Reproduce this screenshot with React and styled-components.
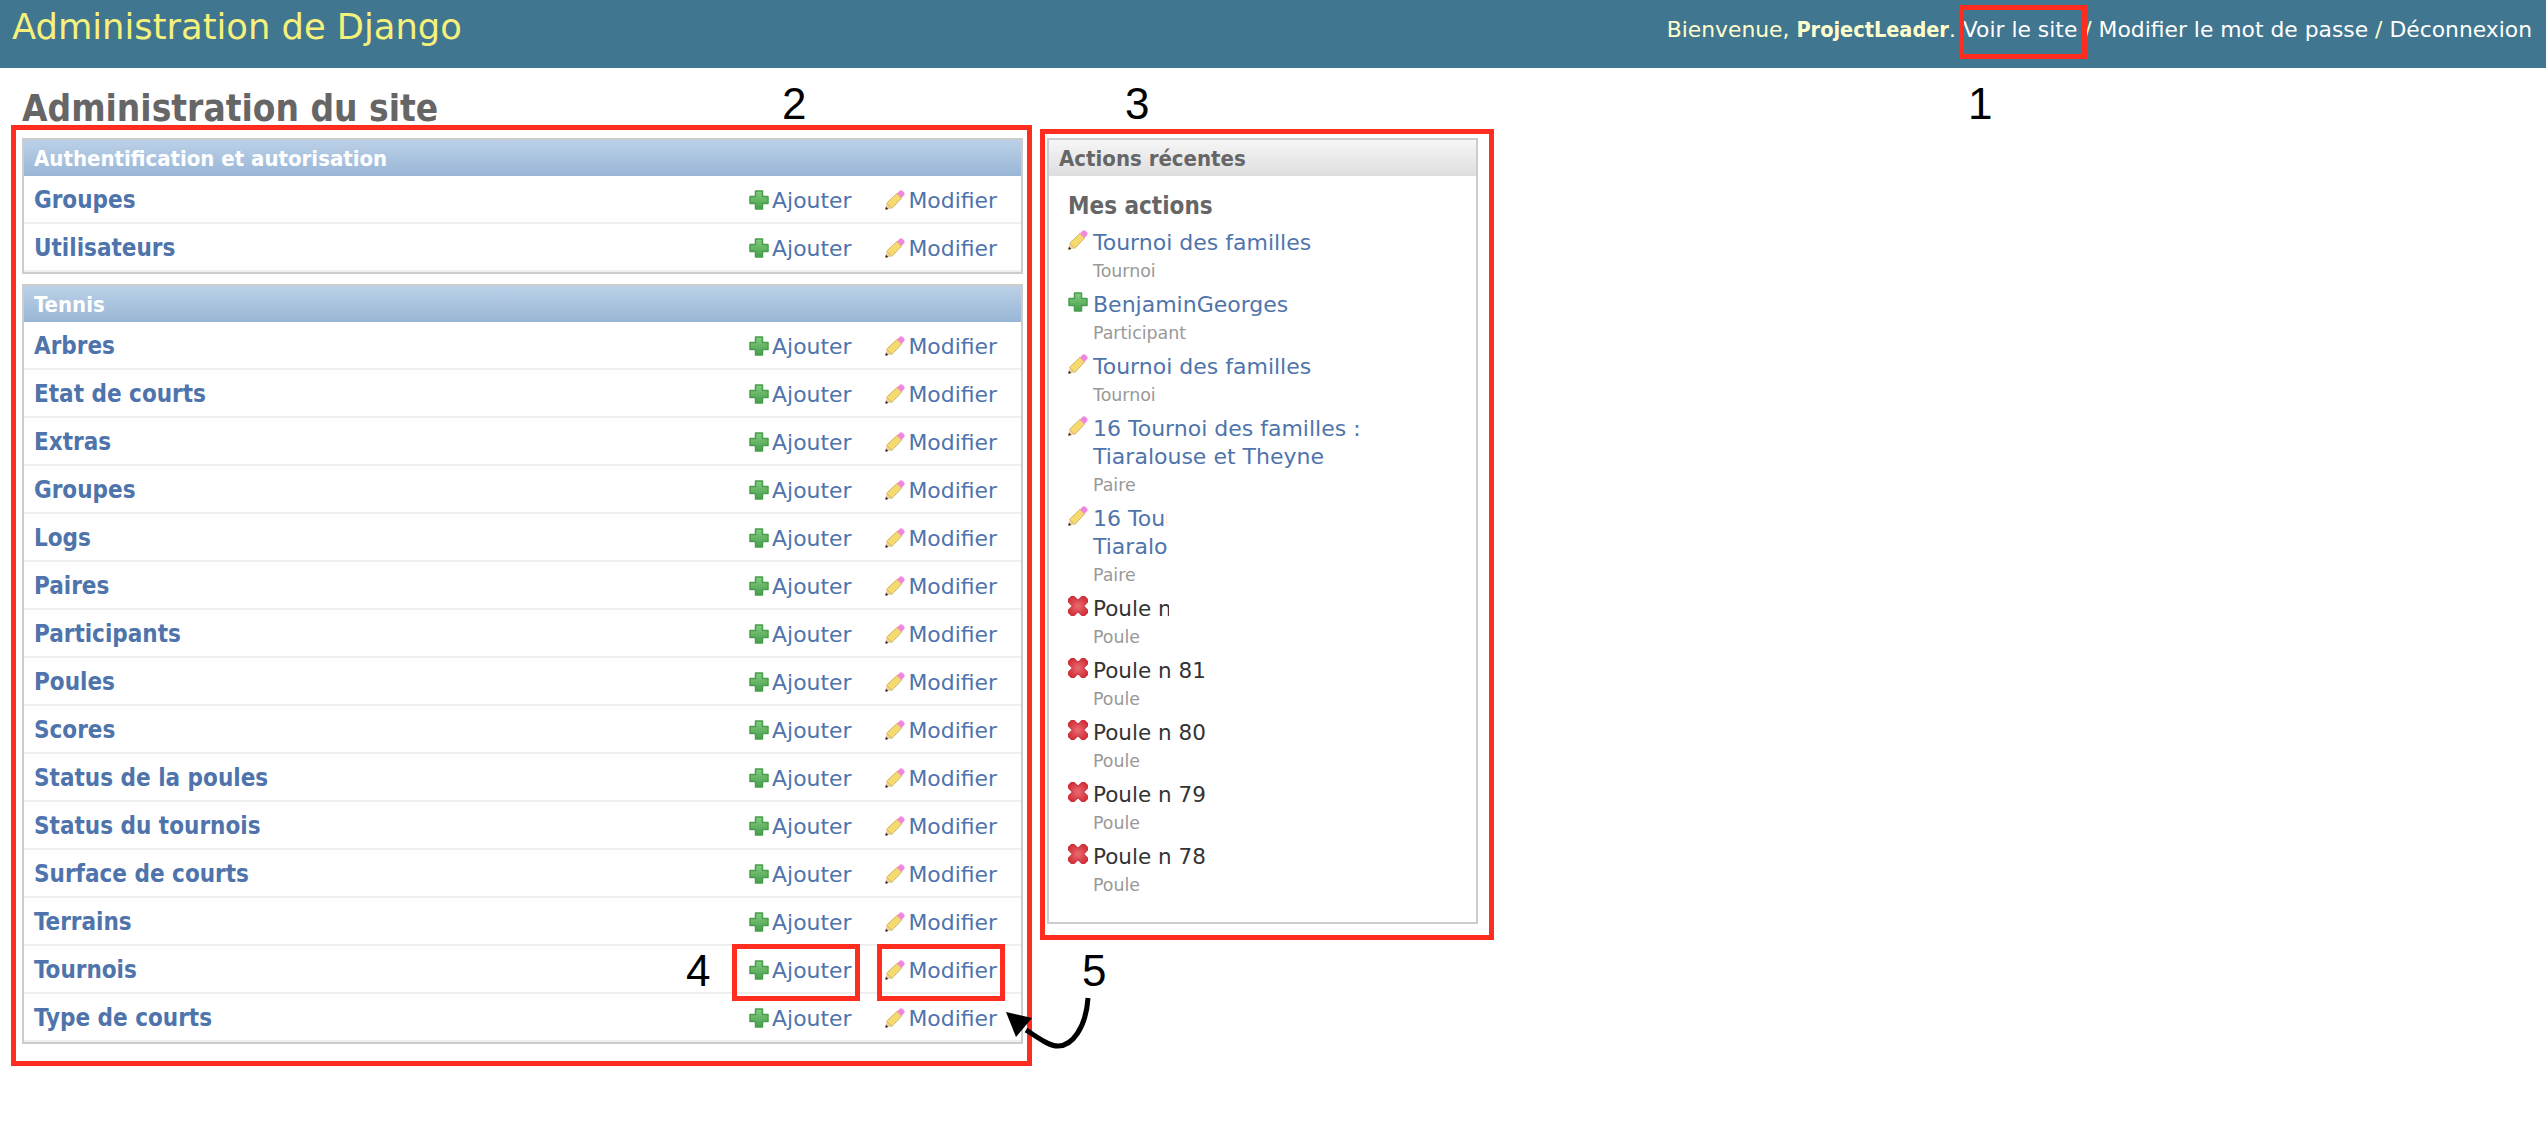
import React from 'react'
import styled, { createGlobalStyle } from 'styled-components'

const Global = createGlobalStyle`
  html, body { margin: 0; padding: 0; background: #fff; }
  body { font-family: "DejaVu Sans", sans-serif; }
`

const Page = styled.div`
  position: relative;
  width: 2546px;
  height: 1140px;
  overflow: hidden;
`
const Header = styled.header`
  height: 68px;
  background: #417690;
  display: flex;
  justify-content: space-between;
  padding: 0 14px 0 12px;
  box-sizing: border-box;
`
const Brand = styled.h1`
  margin: 0;
  font-size: 35.3px;
  font-weight: 400;
  line-height: 54px;
  color: #f5f17a;
`
const UserTools = styled.div`
  font-size: 21.85px;
  line-height: 60px;
  color: #ffc;
  a { color: #fff; }
  strong {
    font-size: 21.5px;
    font-weight: 700;
    font-family: "DejaVu Sans Condensed", "DejaVu Sans", sans-serif;
  }
`
const Content = styled.main`
  padding: 18px 0 0 22px;
`
const Title = styled.h2`
  margin: 0;
  height: 52px;
  font-family: "DejaVu Sans Condensed", "DejaVu Sans", sans-serif;
  font-size: 36.7px;
  line-height: 46px;
  font-weight: 700;
  color: #666;
`
const Columns = styled.div`
  display: flex;
  align-items: flex-start;
  gap: 24px;
`
const LeftColumn = styled.div`
  width: 1001px;
  display: flex;
  flex-direction: column;
  gap: 10px;
`
const Module = styled.section`
  border: 2px solid #ccc;
  box-sizing: border-box;
`
const Caption = styled.div`
  height: 36px;
  padding-left: 10px;
  font-family: "DejaVu Sans Condensed", "DejaVu Sans", sans-serif;
  font-size: 22px;
  font-weight: 700;
  line-height: 37px;
  color: ${p => (p.$grey ? '#666' : '#fff')};
  background: ${p => (p.$grey
    ? 'linear-gradient(#f6f6f6, #dedede)'
    : 'linear-gradient(#bcd1e8, #98b6d6)')};
`
const Row = styled.div`
  height: 48px;
  box-sizing: border-box;
  border-bottom: 2px solid #eee;
  display: flex;
  align-items: center;
  padding: 2px 0 0 10px;
  color: #4f74ab;
  font-size: 21.9px;
`
const RowName = styled.a`
  flex: 1;
  font-family: "DejaVu Sans Condensed", "DejaVu Sans", sans-serif;
  font-size: 24px;
  font-weight: 700;
`
const RowAction = styled.a`
  display: flex;
  align-items: center;
  gap: 3px;
  margin-right: ${p => p.$end}px;
`
const Side = styled(Module)`
  width: 431px;
  height: 786px;
`
const SideBody = styled.div`
  padding: 14px 0 0 19px;
`
const SideTitle = styled.h3`
  margin: 0 0 7px;
  font-family: "DejaVu Sans Condensed", "DejaVu Sans", sans-serif;
  font-size: 24px;
  line-height: 32px;
  font-weight: 700;
  color: #666;
`
const Item = styled.div`
  display: grid;
  grid-template-columns: 20px 1fr;
  column-gap: 5px;
  padding-bottom: 6px;
`
const ItemIcon = styled.div`
  padding-top: 1px;
`
const ItemLink = styled.a`
  display: block;
  font-size: ${p => (p.$deleted ? '21.5px' : '22px')};
  line-height: 28px;
  width: ${p => p.$clip || 290}px;
  overflow: hidden;
  color: ${p => (p.$deleted ? '#333' : '#4f74ab')};
`
const ItemLinkText = styled.span`
  display: block;
  width: 290px;
`
const ItemKind = styled.div`
  font-size: 17.4px;
  line-height: 28px;
  color: #999;
`
const Frame = styled.div`
  position: absolute;
  box-sizing: border-box;
  border: 5px solid #ff2d20;
  left: ${p => p.$x}px;
  top: ${p => p.$y}px;
  width: ${p => p.$w}px;
  height: ${p => p.$h}px;
`
const Mark = styled.div`
  position: absolute;
  left: ${p => p.$x}px;
  top: ${p => p.$y}px;
  font-family: "Liberation Sans", sans-serif;
  font-size: 44px;
  line-height: 50px;
  color: #000;
`
const Arrow = styled.svg`
  position: absolute;
  left: 1000px;
  top: 990px;
`

const PlusIcon = ({ id }) => (
  <svg width="20" height="20" viewBox="0 0 20 20">
    <defs>
      <linearGradient id={id} x1="0" y1="0" x2="0" y2="1">
        <stop offset="0" stopColor="#86cc80" />
        <stop offset="1" stopColor="#459f4a" />
      </linearGradient>
    </defs>
    <path d="M6.5 1h7v5.5H19v7h-5.5V19h-7v-5.5H1v-7h5.5z" fill={`url(#${id})`} stroke="#4a9d4e" strokeWidth="1.5" strokeLinejoin="round" />
  </svg>
)

const PencilIcon = () => (
  <svg width="20" height="20" viewBox="0 0 20 20">
    <path d="M0.3 19.7 L1.6 13.2 L6.8 18.4 Z" fill="#ecd0a8" />
    <path d="M0.3 19.7 L0.9 16.7 L3.3 19.1 Z" fill="#2d1c08" />
    <path d="M1.6 13.2 L11.9 3.4 L16.6 8.1 L6.8 18.4 Z" fill="#f6da70" stroke="#c9a94e" strokeWidth="0.8" />
    <path d="M11.9 3.4 L15 0.6 Q16.2 -0.1 17.4 0.8 L19.2 2.6 Q20 3.8 19.2 5 L16.6 8.1 Z" fill="#f187dc" />
  </svg>
)

const CrossIcon = ({ id }) => (
  <svg width="20" height="20" viewBox="0 0 20 20">
    <defs>
      <radialGradient id={id}>
        <stop offset="0" stopColor="#ea6a72" />
        <stop offset="1" stopColor="#d02c35" />
      </radialGradient>
    </defs>
    <path transform="rotate(45 10 10)" d="M6 -1.5h8V6h7.5v8H14v7.5H6V14h-7.5V6H6z" fill={`url(#${id})`} stroke="#c8323a" strokeWidth="1" strokeLinejoin="round" />
  </svg>
)

const auth = ['Groupes', 'Utilisateurs']
const tennis = ['Arbres', 'Etat de courts', 'Extras', 'Groupes', 'Logs', 'Paires', 'Participants', 'Poules', 'Scores', 'Status de la poules', 'Status du tournois', 'Surface de courts', 'Terrains', 'Tournois', 'Type de courts']

const actions = [
  { kind: 'edit', text: 'Tournoi des familles', type: 'Tournoi' },
  { kind: 'add', text: 'BenjaminGeorges', type: 'Participant' },
  { kind: 'edit', text: 'Tournoi des familles', type: 'Tournoi' },
  { kind: 'edit', text: '16 Tournoi des familles : Tiaralouse et Theyne', type: 'Paire' },
  { kind: 'edit', text: '16 Tournoi des familles : Tiaralouse et Theyne', type: 'Paire', clip: 74 },
  { kind: 'del', text: 'Poule n 82', type: 'Poule', clip: 76 },
  { kind: 'del', text: 'Poule n 81', type: 'Poule' },
  { kind: 'del', text: 'Poule n 80', type: 'Poule' },
  { kind: 'del', text: 'Poule n 79', type: 'Poule' },
  { kind: 'del', text: 'Poule n 78', type: 'Poule' },
]

const AppRows = ({ names, prefix }) => names.map((name, i) => (
  <Row key={name}>
    <RowName>{name}</RowName>
    <RowAction $end={34}><PlusIcon id={`${prefix}p${i}`} />Ajouter</RowAction>
    <RowAction $end={24}><PencilIcon />Modifier</RowAction>
  </Row>
))

export default function App() {
  return (
    <Page>
      <Global />
      <Header>
        <Brand>Administration de Django</Brand>
        <UserTools>
          Bienvenue, <strong>ProjectLeader</strong>. <a>Voir le site</a> / <a>Modifier le mot de passe</a> / <a>Déconnexion</a>
        </UserTools>
      </Header>
      <Content>
        <Title>Administration du site</Title>
        <Columns>
          <LeftColumn>
            <Module>
              <Caption>Authentification et autorisation</Caption>
              <AppRows names={auth} prefix="a" />
            </Module>
            <Module>
              <Caption>Tennis</Caption>
              <AppRows names={tennis} prefix="t" />
            </Module>
          </LeftColumn>
          <Side>
            <Caption $grey>Actions récentes</Caption>
            <SideBody>
              <SideTitle>Mes actions</SideTitle>
              {actions.map((a, i) => (
                <Item key={i}>
                  <ItemIcon>
                    {a.kind === 'edit' && <PencilIcon />}
                    {a.kind === 'add' && <PlusIcon id={`s${i}`} />}
                    {a.kind === 'del' && <CrossIcon id={`x${i}`} />}
                  </ItemIcon>
                  <div>
                    <ItemLink $clip={a.clip} $deleted={a.kind === 'del'}>
                      <ItemLinkText>{a.text}</ItemLinkText>
                    </ItemLink>
                    <ItemKind>{a.type}</ItemKind>
                  </div>
                </Item>
              ))}
            </SideBody>
          </Side>
        </Columns>
      </Content>

      <Frame $x={1959} $y={5} $w={128} $h={54} />
      <Frame $x={11} $y={125} $w={1021} $h={941} />
      <Frame $x={1040} $y={129} $w={454} $h={811} />
      <Frame $x={732} $y={944} $w={128} $h={57} />
      <Frame $x={877} $y={944} $w={128} $h={57} />
      <Mark $x={1968} $y={79}>1</Mark>
      <Mark $x={782} $y={79}>2</Mark>
      <Mark $x={1125} $y={79}>3</Mark>
      <Mark $x={686} $y={946}>4</Mark>
      <Mark $x={1082} $y={946}>5</Mark>
      <Arrow width="100" height="70" viewBox="0 0 100 70">
        <path d="M88 8 C86 38 72 56 58 56 C48 56 36 46 26 40" fill="none" stroke="#000" strokeWidth="5" />
        <path d="M6 22 L32 28 L16 47 Z" fill="#000" />
      </Arrow>
    </Page>
  )
}
